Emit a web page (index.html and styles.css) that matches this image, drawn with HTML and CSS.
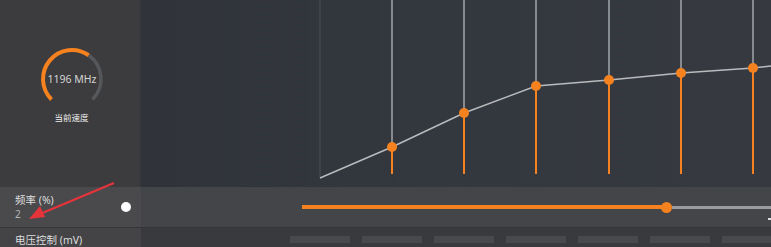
FILE: index.html
```html
<!DOCTYPE html>
<html lang="zh-CN">
<head>
    <meta charset="UTF-8">
    <title>超频曲线</title>
    <link rel="stylesheet" href="styles.css">
</head>
<body>
    <div class="app">
        <div class="top">
            <div class="side">
                <svg class="gauge" width="70" height="70" viewBox="0 0 70 70">
                    <path d="M51.63 11.24 A29 29 0 0 1 55.5 55.5" fill="none" stroke="#56575a" stroke-width="3.5"/>
                    <path d="M14.5 55.5 A29 29 0 0 1 51.63 11.24" fill="none" stroke="#f5821f" stroke-width="4"/>
                    <text x="35" y="39" text-anchor="middle" class="gauge-val">1196 MHz</text>
                </svg>
                <div class="gauge-label">当前速度</div>
            </div>
            <div class="chart">
                <svg width="630" height="187" viewBox="141 0 630 187">
                    <line x1="320" y1="0" x2="320" y2="177" stroke="#4b4f56" stroke-width="1"/>
                    <g stroke="#a3a6aa" stroke-width="1.5">
                        <line x1="392" y1="0" x2="392" y2="147"/>
                        <line x1="464" y1="0" x2="464" y2="113"/>
                        <line x1="536" y1="0" x2="536" y2="86"/>
                        <line x1="609" y1="0" x2="609" y2="80"/>
                        <line x1="681" y1="0" x2="681" y2="73"/>
                        <line x1="753" y1="0" x2="753" y2="68"/>
                    </g>
                    <g stroke="#f5821f" stroke-width="2">
                        <line x1="392" y1="147" x2="392" y2="174"/>
                        <line x1="464" y1="113" x2="464" y2="174"/>
                        <line x1="536" y1="86" x2="536" y2="174"/>
                        <line x1="609" y1="80" x2="609" y2="174"/>
                        <line x1="681" y1="73" x2="681" y2="174"/>
                        <line x1="753" y1="68" x2="753" y2="174"/>
                    </g>
                    <polyline points="320,178 392,147 464,113 536,86 609,80 681,73 753,68 771,66" fill="none" stroke="#b9bbbe" stroke-width="1.5"/>
                    <g fill="#f5821f">
                        <circle cx="392" cy="147" r="5"/>
                        <circle cx="464" cy="113" r="5"/>
                        <circle cx="536" cy="86" r="5"/>
                        <circle cx="609" cy="80" r="5"/>
                        <circle cx="681" cy="73" r="5"/>
                        <circle cx="753" cy="68" r="5"/>
                    </g>
                </svg>
            </div>
        </div>

        <div class="row">
            <div class="row-label">
                <div class="label-text">
                    <div class="name">频率 (%)</div>
                    <div class="value">2</div>
                </div>
                <span class="toggle"></span>
            </div>
            <div class="slider-area">
                <div class="slider">
                    <div class="fill"></div>
                    <span class="thumb"></span>
                    <div class="rest"></div>
                </div>
                <span class="dot"></span>
            </div>
        </div>

        <div class="row-bottom">
            <div class="row-label small">电压控制 (mV)</div>
            <div class="cells">
                <span></span><span></span><span></span><span></span><span></span><span></span><span></span>
            </div>
        </div>
    </div>

    <svg class="arrow" width="100" height="45" viewBox="25 180 100 45">
        <line x1="114" y1="183" x2="40" y2="214" stroke="#e6343b" stroke-width="2.2"/>
        <polygon points="29,219 40,206 45,217" fill="#e6343b"/>
    </svg>
</body>
</html>
```

FILE: styles.css
```css
body {
    margin: 0;
    background: #2e3136;
    font-family: "Noto Sans", "Noto Sans CJK SC", sans-serif;
    overflow: hidden;
}
.app {
    width: 771px;
    height: 247px;
    display: flex;
    flex-direction: column;
}
.top {
    display: flex;
    height: 187px;
}
.side {
    width: 141px;
    flex-shrink: 0;
    background: #3c3c3e;
    border-right: 1px solid #35363a;
    box-sizing: border-box;
    display: flex;
    flex-direction: column;
    align-items: center;
    padding-top: 44px;
    padding-left: 3px;
}
.gauge-val {
    font-size: 10.5px;
    fill: #d4d4d4;
}
.gauge-label {
    margin-top: -3px;
    font-size: 8.5px;
    color: #eeeeee;
}
.chart {
    flex: 1;
    background: linear-gradient(90deg, #30343a 0%, #33383e 45%, #363a40 100%);
    line-height: 0;
}
.row {
    display: flex;
    height: 40px;
    border-bottom: 1px solid #353639;
}
.row-label {
    width: 141px;
    flex-shrink: 0;
    background: #4a4a4d;
    box-sizing: border-box;
    padding: 0 10px 0 15px;
    display: flex;
    align-items: center;
    justify-content: space-between;
    color: #dddddd;
}
.name {
    font-size: 10.5px;
    line-height: 14px;
}
.value {
    font-size: 10px;
    line-height: 14px;
    color: #b5b5b5;
}
.toggle {
    width: 10px;
    height: 10px;
    border-radius: 50%;
    background: #ffffff;
}
.slider-area {
    flex: 1;
    background: #434548;
    display: flex;
    align-items: center;
    padding-left: 161px;
    position: relative;
}
.slider {
    flex: 1;
    display: flex;
    align-items: center;
}
.fill {
    width: 362px;
    height: 4px;
    background: #f5821f;
}
.thumb {
    width: 11px;
    height: 11px;
    border-radius: 50%;
    background: #f5821f;
    margin-left: -3px;
}
.rest {
    flex: 1;
    height: 3px;
    background: #9a9b9d;
}
.dot {
    position: absolute;
    right: 0;
    top: 31px;
    width: 3px;
    height: 2px;
    background: #dddddd;
}
.row-bottom {
    display: flex;
    flex: 1;
}
.row-label.small {
    background: #444447;
    font-size: 10.5px;
    align-items: flex-start;
    padding-top: 4px;
}
.cells {
    flex: 1;
    background: #393a3d;
    display: flex;
    gap: 12px;
    padding: 8px 0 0 149px;
}
.cells span {
    width: 60px;
    height: 7px;
    flex-shrink: 0;
    background: #48494c;
}
.cells span:last-child {
    flex: 1;
}
.arrow {
    position: absolute;
    left: 25px;
    top: 180px;
}
```
